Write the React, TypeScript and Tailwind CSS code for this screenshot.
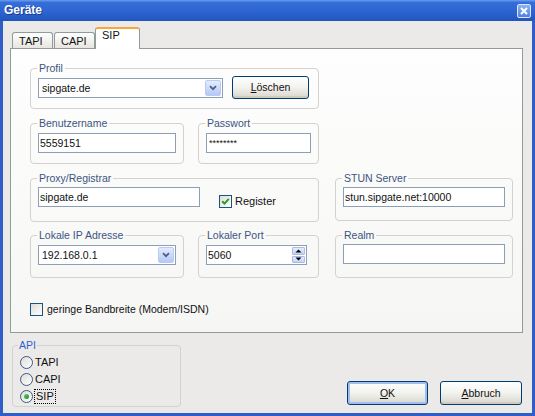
import type { ReactNode } from 'react';

type GroupProps = {
  label: string;
  className: string;
  legendClassName?: string;
  children?: ReactNode;
};

const Group = ({ label, className, legendClassName = '-ml-px px-[2px] text-[#3b5580]', children }: GroupProps) => (
  <fieldset className={`shrink-0 rounded-[4px] border border-[#d3d2ce] px-[7px] ${className}`}>
    <legend className={`leading-[13px] ${legendClassName}`}>{label}</legend>
    {children}
  </fieldset>
);

const DropArrow = () => (
  <div className="mr-px flex h-[16px] w-[16px] shrink-0 items-center justify-center rounded-[2px] border border-[#b9cbf3] bg-gradient-to-b from-[#e3ecfe] to-[#b5c9f5]">
    <svg width="8" height="6" viewBox="0 0 8 6">
      <path d="M1 1.2 L4 4.2 L7 1.2" stroke="#4d6185" strokeWidth="1.8" fill="none" />
    </svg>
  </div>
);

const Combo = ({ value, className }: { value: string; className: string }) => (
  <div className={`flex h-[20px] items-center border border-[#8c9fb5] bg-white pl-[3px] ${className}`}>
    <span className="flex-1">{value}</span>
    <DropArrow />
  </div>
);

const TextBox = ({ value, className, children }: { value?: ReactNode; className: string; children?: ReactNode }) => (
  <div className={`flex h-[20px] items-center border border-[#8c9fb5] bg-white pl-[1px] ${className}`}>
    <span className="flex-1">{value}</span>
    {children}
  </div>
);

const Check = ({ checked }: { checked?: boolean }) => (
  <div className="flex h-[13px] w-[13px] shrink-0 items-center justify-center border border-[#1c5180] bg-gradient-to-br from-[#dcdcd7] to-white">
    {checked && (
      <svg width="9" height="9" viewBox="0 0 9 9">
        <path d="M1.2 4.2 L3.5 6.6 L7.8 1.8" stroke="#21a121" strokeWidth="2" fill="none" />
      </svg>
    )}
  </div>
);

const Radio = ({ checked }: { checked?: boolean }) => (
  <div className="flex h-[13px] w-[13px] shrink-0 items-center justify-center rounded-full border border-[#3a5a85] bg-gradient-to-br from-[#dcdcd7] to-white">
    {checked && <div className="h-[5px] w-[5px] rounded-full bg-gradient-to-br from-[#60d060] to-[#1d901d]" />}
  </div>
);

const XpButton = ({ children, className, isDefault }: { children: ReactNode; className: string; isDefault?: boolean }) => (
  <div
    className={`flex shrink-0 items-center justify-center rounded-[3px] border border-[#003c74] bg-gradient-to-b from-white via-[#f2f2ee] to-[#d8d5cc] ${
      isDefault ? 'shadow-[inset_0_0_0_2px_#a3bdee]' : 'shadow-[inset_0_-2px_0_#d0cbc0]'
    } ${className}`}
  >
    {children}
  </div>
);

const Spinner = () => (
  <div className="mr-px flex h-[16px] w-[13px] shrink-0 flex-col gap-px">
    <div className="flex flex-1 items-center justify-center rounded-[1px] border border-[#a9bce6] bg-gradient-to-b from-[#e6edfd] to-[#c3d3f6]">
      <svg width="7" height="4" viewBox="0 0 7 4">
        <path d="M0.5 3.5 L3.5 0.5 L6.5 3.5 Z" fill="#000" />
      </svg>
    </div>
    <div className="flex flex-1 items-center justify-center rounded-[1px] border border-[#a9bce6] bg-gradient-to-b from-[#e6edfd] to-[#c3d3f6]">
      <svg width="7" height="4" viewBox="0 0 7 4">
        <path d="M0.5 0.5 L3.5 3.5 L6.5 0.5 Z" fill="#000" />
      </svg>
    </div>
  </div>
);

const Tab = ({ label, active, className }: { label: string; active?: boolean; className?: string }) =>
  active ? (
    <div
      className={`relative z-10 -mb-px h-[22px] w-[45px] rounded-t-[3px] border-x border-t-[2px] border-x-[#919b9c] border-t-[#f5a93a] bg-white pl-[6px] text-[11px] ${className ?? ''}`}
    >
      {label}
    </div>
  ) : (
    <div
      className={`h-[16px] w-[41px] rounded-t-[3px] border border-b-0 border-[#919b9c] bg-gradient-to-b from-white to-[#e6e5e0] pl-[6px] pt-[2px] text-[11px] ${className ?? ''}`}
    >
      {label}
    </div>
  );

export default function App() {
  return (
    <div className="flex h-[416px] w-[535px] flex-col bg-[#2f5fc6] font-['Liberation_Sans',Arial,sans-serif] text-[10.5px] leading-[13px] text-[#111]">
      {/* title bar */}
      <div className="flex h-[21px] shrink-0 items-center bg-[linear-gradient(to_bottom,#6a9ef0_0%,#356ed8_12%,#2c63d0_60%,#2154bd_100%)] pl-[4px] pr-[4px]">
        <span className="flex-1 text-[12px] font-bold text-white [text-shadow:1px_1px_0_#1a3b8c]">Geräte</span>
        <div className="flex h-[14px] w-[14px] items-center justify-center rounded-[2px] border border-[#dfe8fb] bg-gradient-to-b from-[#8db2f5] to-[#4f82e2]">
          <svg width="8" height="8" viewBox="0 0 8 8">
            <path d="M1 1 L7 7 M7 1 L1 7" stroke="#fff" strokeWidth="2" />
          </svg>
        </div>
      </div>

      {/* client area */}
      <div className="mx-[3px] mb-[3px] flex flex-1 flex-col bg-[#ece9e9] pl-[7px] pt-[6px]">
        {/* tab strip */}
        <div className="flex h-[21px] shrink-0 items-end pl-[2px]">
          <Tab label="TAPI" />
          <Tab label="CAPI" className="ml-px" />
          <Tab label="SIP" active />
        </div>

        {/* tab page */}
        <div className="flex h-[285px] w-[513px] shrink-0 flex-col border border-[#919b9c] bg-gradient-to-b from-[#fefefe] to-[#f6f6f4] pl-[19px] pt-[13px]">
          <Group label="Profil" className="h-[47px] w-[289px]">
            <div className="flex items-start">
              <Combo value="sipgate.de" className="mt-[3px] w-[185px]" />
              <XpButton className="ml-[9px] mt-px h-[23px] w-[77px]">
                <span>
                  <span className="underline">L</span>öschen
                </span>
              </XpButton>
            </div>
          </Group>

          <div className="mt-[8px] flex">
            <Group label="Benutzername" className="h-[47px] w-[154px]">
              <TextBox value="5559151" className="mt-[3px] w-[138px]" />
            </Group>
            <Group label="Passwort" className="ml-[14px] h-[47px] w-[121px]">
              <TextBox value="********" className="mt-[3px] w-[105px] pl-[2px] text-[9px]" />
            </Group>
          </div>

          <div className="mt-[8px] flex">
            <Group label="Proxy/Registrar" className="h-[50px] w-[289px]">
              <div className="flex items-start">
                <TextBox value="sipgate.de" className="mt-[2px] w-[162px]" />
                <div className="ml-[19px] mt-[10px] flex items-center">
                  <Check checked />
                  <span className="ml-[3px] text-[11px]">Register</span>
                </div>
              </div>
            </Group>
            <Group label="STUN Server" className="ml-[16px] h-[49px] w-[177px] px-[6px]">
              <TextBox value="stun.sipgate.net:10000" className="mt-[2px] w-[162px]" />
            </Group>
          </div>

          <div className="mt-[7px] flex">
            <Group label="Lokale IP Adresse" className="h-[49px] w-[154px]">
              <Combo value="192.168.0.1" className="mt-[3px] w-[138px]" />
            </Group>
            <Group label="Lokaler Port" className="ml-[14px] h-[49px] w-[121px]">
              <TextBox value="5060" className="mt-[3px] w-[101px]">
                <Spinner />
              </TextBox>
            </Group>
            <Group label="Realm" className="ml-[16px] h-[49px] w-[177px] px-[6px]">
              <TextBox className="mt-[2px] w-[162px]" />
            </Group>
          </div>

          <div className="mt-[25px] flex items-center">
            <Check />
            <span className="ml-[4px]">geringe Bandbreite (Modem/ISDN)</span>
          </div>
        </div>

        {/* bottom row */}
        <div className="mt-[6px] flex items-end pr-[10px]">
          <Group
            label="API"
            className="ml-[2px] h-[68px] w-[169px]"
            legendClassName="-ml-[2px] px-[1px] text-[#2e62c8]"
          >
            <div className="mt-[2px] flex flex-col">
              <div className="flex h-[17px] items-center">
                <Radio />
                <span className="ml-[2px] text-[11px]">TAPI</span>
              </div>
              <div className="flex h-[17px] items-center">
                <Radio />
                <span className="ml-[2px] text-[11px]">CAPI</span>
              </div>
              <div className="flex h-[17px] items-center">
                <Radio checked />
                <span className="ml-[1px] border border-dotted border-black px-px text-[11px] leading-[13px]">SIP</span>
              </div>
            </div>
          </Group>
          <div className="flex-1" />
          <XpButton isDefault className="mb-[2px] h-[24px] w-[81px]">
            <span>
              <span className="underline">O</span>K
            </span>
          </XpButton>
          <XpButton className="mb-[2px] ml-[12px] h-[24px] w-[82px]">
            <span>
              <span className="underline">A</span>bbruch
            </span>
          </XpButton>
        </div>
      </div>
    </div>
  );
}
